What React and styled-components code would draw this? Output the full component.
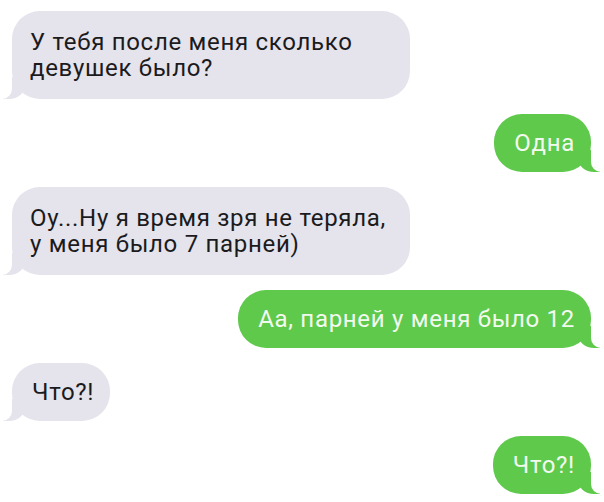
import React from 'react';
import styled, { createGlobalStyle, css } from 'styled-components';

const GlobalStyle = createGlobalStyle`
  html, body {
    margin: 0;
    padding: 0;
    background: #fff;
  }
  body {
    font-family: Roboto, "Noto Sans", sans-serif;
  }
`;

// chat column
const Chat = styled.div`
  width: 604px;
  height: 502px;
  box-sizing: border-box;
  padding: 11px 13px 0 12px;
  display: flex;
  flex-direction: column;
  gap: 15px;
  overflow: hidden;
`;

const incoming = css`
  align-self: flex-start;
  background: #e5e3eb;
  color: #1b1b1d;

  &::before {
    left: -9px;
    border-bottom-right-radius: 16px 14px;
    background: #e5e3eb;
  }
  &::after {
    left: -26px;
    border-bottom-right-radius: 10px;
  }
`;

const outgoing = css`
  align-self: flex-end;
  background: #5ec94b;
  color: #f2faef;

  &::before {
    right: -9px;
    border-bottom-left-radius: 16px 14px;
    background: #5ec94b;
  }
  &::after {
    right: -26px;
    border-bottom-left-radius: 10px;
  }
`;

// message bubble with the tail on one side
const Bubble = styled.div`
  position: relative;
  box-sizing: border-box;
  max-width: 398px;
  padding: ${p => (p.$lines > 1 ? '18px 16px 18px 18px' : '16px 16px 16px 20px')};
  border-radius: 28px;
  font-size: 24px;
  line-height: 26px;
  letter-spacing: 0.7px;

  &::before,
  &::after {
    content: "";
    position: absolute;
    bottom: 0;
    height: 22px;
  }
  &::before {
    width: 22px;
  }
  &::after {
    width: 26px;
    background: #fff;
  }

  ${p => (p.$me ? outgoing : incoming)}
`;

const messages = [
  { me: false, lines: 2, text: 'У тебя после меня сколько девушек было?' },
  { me: true, lines: 1, text: 'Одна' },
  { me: false, lines: 2, text: 'Оу...Ну я время зря не теряла, у меня было 7 парней)' },
  { me: true, lines: 1, text: 'Аа, парней у меня было 12' },
  { me: false, lines: 1, text: 'Что?!' },
  { me: true, lines: 1, text: 'Что?!' },
];

export default function App() {
  return (
    <>
      <GlobalStyle />
      <Chat>
        {messages.map((m, i) => (
          <Bubble key={i} $me={m.me} $lines={m.lines}>
            {m.text}
          </Bubble>
        ))}
      </Chat>
    </>
  );
}
